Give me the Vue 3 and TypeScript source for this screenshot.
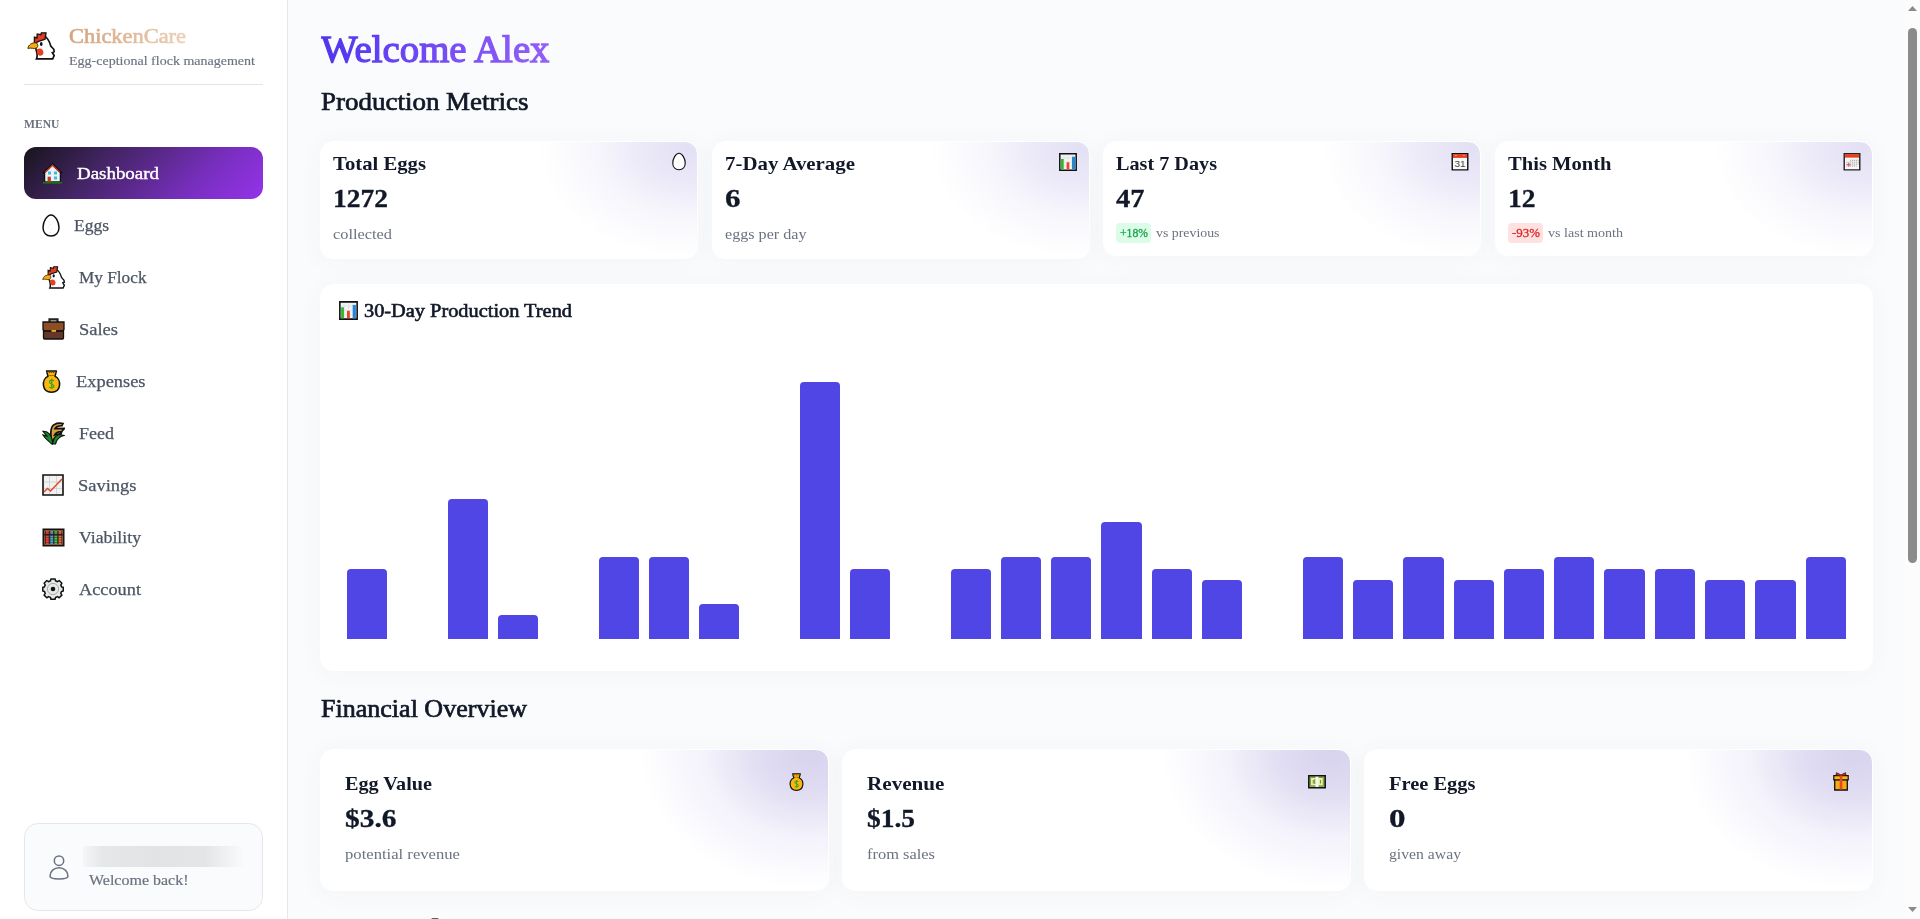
<script setup lang="ts">
import type { Directive } from 'vue'

interface Icon {
  w: number
  h: number
  body: string
}
interface NavItem {
  label: string
  icon: string
  width: number
  slot: number
}
interface Stat {
  title: string
  titleW: number
  value: string
  valueW: number
  note: string
  noteW: number
  icon: string
  badge?: string
  badgeW?: number
  trend?: 'up' | 'down'
}

/* Stretches a line of text horizontally so that it fills the given measure. */
const vFit: Directive<HTMLElement, number> = {
  mounted(el, { value }) {
    const natural = el.getBoundingClientRect().width
    if (!natural) return
    el.style.transform = `scaleX(${value / natural})`
    el.style.marginRight = `${value - natural}px`
  },
}

const bag = `<path d="M4.600 1h9.800L13 6.300c6.800 3 6.500 15.900-3.500 15.900S-.8 9.300 6 6.300Z" fill="#fbb710" stroke="#111" stroke-width="1.500" stroke-linejoin="round"/><path d="M4.500 2.400h10M6 5.500h7" stroke="#7a5200" stroke-width="1.200" stroke-dasharray="1.500 .6"/><path d="M12 10.800C10 9.300 7.300 10.300 7.500 12.200c.2 2 4.300 1.600 4.400 3.800 0 2-3 2.600-4.600 1M9.700 8.800v10" fill="none" stroke="#3fa61c" stroke-width="1.300"/>`
const bars = `<path d="M.8.800h16.400v16.400H.8Z" fill="#f2f3f3" stroke="#111" stroke-width="1.500"/><path d="M5 2v14M9 2v14M13 2v14M2 5h14M2 9h14M2 13h14" stroke="#d9dada" stroke-width=".5"/><path d="M2 6h2.700v10.400H2Z" fill="#32b52f"/><path d="M7.600 9.300h2.700v7.100H7.600Z" fill="#e8472c"/><path d="M13 3.700h3v12.700h-3Z" fill="#2486d8"/>`
const egg = `<path d="M9 .9C13.300.9 17 8.200 17 13.500c0 5.200-3.300 8.600-8 8.600s-8-3.400-8-8.600C1 8.200 4.700.9 9 .9Z" fill="#fff" stroke="#111" stroke-width="1.500"/><path d="M8 10.500h.8M9 15h.8M6 13h.8M8 18.500h.8" stroke="#ddd"/>`
const hen = `<path d="M7 8.500 14 3c4 2.500 4.800 6 5.500 8.500l2.500 2.700.3 2-1.500.7 1.500 2.400-1.200 2.700H7.800C9 19.500 8.300 17 7.300 14Z" fill="#fff" stroke="#111" stroke-width="1.400"/><path d="M6.100 9.500V4.200l2 .7.300-3.300 3 .6.4-1.500h3.800L14.800 6l-5.300 1.700Z" fill="#e33c20" stroke="#111" stroke-width="1.100"/><path d="M.7 13.500c.4-3 3.500-5 6.900-4.600 1.700 1.200 1.700 3 .2 4.400-2.500.7-4.500-.6-7.100.2Z" fill="#f6ad13" stroke="#4a2e00" stroke-width=".8"/><path d="M8 14.300c3-1.900 5.800.1 5.500 3-.3 2.400-3.500 3-4.800 1Z" fill="#e8401f"/><ellipse cx="11.700" cy="9.800" rx="1.100" ry="1.600" fill="#111"/>`

const icons: Record<string, Icon> = {
  hen: { w: 23, h: 23, body: hen },
  house: {
    w: 21,
    h: 21,
    body: `<path d="M2.600 9.500 10.500 2l7.900 7.500V19H2.600Z" fill="#eaf4f7" stroke="#111" stroke-width="1.300"/><path d="m1.200 10.300 9.300-9 9.300 9" fill="none" stroke="#111" stroke-width="2.200"/><path d="m3 9.500 7.500-7.300L18 9.500" fill="none" stroke="#cc3a2a" stroke-width="1.300"/><path d="M6 8.500h3v3H6ZM12 8.500h3v3h-3ZM12 13.500h3v3h-3Z" fill="#40b9de"/><path d="M5.600 13.700h3.300V19H5.600Z" fill="#c83520"/><path d="M1 19.700h19" stroke="#226b18" stroke-width="2"/>`,
  },
  egg: { w: 18, h: 23, body: egg },
  case: {
    w: 23,
    h: 22,
    body: `<path d="M7.500 4V1.300h8V4" fill="none" stroke="#222" stroke-width="2.200"/><rect x="1.500" y="11" width="20" height="10" rx="1" fill="#633629" stroke="#111" stroke-width="1.300"/><path d="M1 4h21v7.500L20.500 13h-18L1 11.500Z" fill="#8d4d25" stroke="#111" stroke-width="1.300"/><path d="M2.500 13h18" stroke="#241007"/><path d="M9.500 12h4.500v1.800H9.500Z" fill="#f0b323"/>`,
  },
  bag: { w: 19, h: 23, body: bag },
  rice: {
    w: 23,
    h: 23,
    body: `<path d="M10.500 21C8 14 8 4.500 12.500 2.500 15 1 18 1 21 1.500l-1 2.200c-4 .3-6 .8-7 3l9.300-.3-2.700 3.300c-4 0-6 1-7 3.300l6.500-1.500-1 2.500c-2.500.3-5 1.500-5.600 3Z" fill="#d8a138" stroke="#111" stroke-width="1.700"/><path d="M10.800 22C11 15 15 11 22 13.500c-5 1-7.300 3.500-8.500 8.500h-3.800C7 19 3.500 17.500 1 13l4 1.200L1 9.300c5-.5 9 3.500 9.800 12.700Z" fill="#178c2a" stroke="#111" stroke-width="1.200"/>`,
  },
  trend: {
    w: 22,
    h: 22,
    body: `<path d="M1 1h20v20H1Z" fill="#f1f2f2" stroke="#111" stroke-width="1.600"/><path d="M7.500 2v18M14.500 2v18M2 8h18M2 14.500h18" stroke="#cfd1d1" stroke-width=".8"/><path d="m2 18 3.500-3.500L8.500 17 20 5" fill="none" stroke="#e2482d" stroke-width="1.500"/>`,
  },
  abacus: {
    w: 23,
    h: 19,
    body: `<path d="M1.200 1.200h20.600v16.600H1.200Z" fill="#3a2721" stroke="#111" stroke-width="1.400"/><path d="M2.500 2.500h18v14h-18Z" fill="none" stroke="#94573a" stroke-width=".9"/><path d="M5.300 3v13.500" stroke="#ec4438" stroke-width="2.800" stroke-dasharray="1.800 .5"/><path d="M9.700 3v13.500" stroke="#43a4e3" stroke-width="2.800" stroke-dasharray="1.800 .5"/><path d="M13.800 3v13.500" stroke="#3fbd48" stroke-width="2.800" stroke-dasharray="1.800 .5"/><path d="M18 3v13.500" stroke="#e5713e" stroke-width="2.800" stroke-dasharray="1.800 .5"/><path d="M2 6.700h19" stroke="#251714" stroke-width="1.200"/>`,
  },
  gear: {
    w: 22,
    h: 22,
    body: `<path d="m8.500 2.800.4-1.900h4.200l.4 1.900 2 .9 1.700-1.200 2.700 2.700-1.100 1.900.8 1.800 1.700.4v3.700l-1.700.4-.8 1.900 1.100 1.800-2.700 2.700-1.700-1.200-2 .9-.4 1.800H8.900l-.4-1.800-2-.9-1.700 1.200-2.700-2.700 1.100-1.800-.8-1.900L.8 13V9.300l1.600-.4.8-1.800-1.100-1.900 2.700-2.700 1.700 1.200Z" fill="#e7e8e8" stroke="#111" stroke-width="1.500" stroke-linejoin="round"/><circle cx="11" cy="11" r="5.600" fill="none" stroke="#999" stroke-width=".8"/><circle cx="11" cy="11" r="2.300" fill="#111"/>`,
  },
  bars: { w: 18, h: 18, body: bars },
  cal31: {
    w: 18,
    h: 19,
    body: `<path d="M.8.800h16.400v17H.8Z" fill="#f8f8f8" stroke="#111" stroke-width="1.500"/><path d="M1.500 1.300h15v3.900h-15Z" fill="#e8401f"/><path d="M4 2.700h1.300M12.500 2.700h1.300" stroke="#ffc7b8"/><text x="9" y="14.700" text-anchor="middle" font-family="Liberation Sans, sans-serif" font-size="10.500" fill="#444">31</text>`,
  },
  cal: {
    w: 18,
    h: 19,
    body: `<path d="M.8.800h16.400v17H.8Z" fill="#f8f8f8" stroke="#222" stroke-width="1.500"/><path d="M1.500 1.300h15v3.600h-15Z" fill="#e8401f"/><path d="M7 7.700h9M3 9.700h13M3 11.700h13M3 13.700h11" stroke="#999" stroke-width="1" stroke-dasharray="1.200 .8"/><path d="M3.500 12.300h4M5.500 10.500v3.700" stroke="#e06070" stroke-width="1.300"/>`,
  },
  note: {
    w: 18,
    h: 14,
    body: `<path d="M.8.800h16.400v12H.8Z" fill="#9eb56e" stroke="#111" stroke-width="1.500"/><path d="M2.500 2.500h12.800v8.300H2.500Z" fill="#e5f59c" stroke="#6d8b3a" stroke-width=".8"/><path d="M7.500 1.700h3V12h-3Z" fill="#f7f7f0"/><path d="M5.300 5v3.500M12.500 5v3.500M6.700 4v5" stroke="#74983a" stroke-width="1.100"/>`,
  },
  gift: {
    w: 16,
    h: 19,
    body: `<path d="M1.700 7.500h12.600V18H1.700Z" fill="#f8a913" stroke="#111" stroke-width="1.300"/><path d="M.8 3.700h14.400v4.200H.8Z" fill="#fbb315" stroke="#111" stroke-width="1.200"/><path d="m8 4-5-1.300.5-2L8 3l4.500-2.300.5 2Z" fill="#e5412b" stroke="#5b140b" stroke-width=".9"/><path d="M8 3.700v13.800" stroke="#df4c22" stroke-width="2.600"/>`,
  },
  user: {
    w: 20,
    h: 25,
    body: `<circle cx="10" cy="5.700" r="4.700" fill="none" stroke="#6b7280" stroke-width="1.500"/><path d="M1 21c0-4.700 4-8.200 9-8.200s9 3.500 9 8.200c0 1.500-2 3-9 3s-9-1.500-9-3Z" fill="none" stroke="#6b7280" stroke-width="1.500"/>`,
  },
}

const nav: NavItem[] = [
  { label: 'Dashboard', icon: 'house', width: 82, slot: 35 },
  { label: 'Eggs', icon: 'egg', width: 35, slot: 32 },
  { label: 'My Flock', icon: 'hen', width: 67.5, slot: 37 },
  { label: 'Sales', icon: 'case', width: 39, slot: 37 },
  { label: 'Expenses', icon: 'bag', width: 69.5, slot: 33.5 },
  { label: 'Feed', icon: 'rice', width: 35, slot: 37 },
  { label: 'Savings', icon: 'trend', width: 58.5, slot: 35.5 },
  { label: 'Viability', icon: 'abacus', width: 62, slot: 37 },
  { label: 'Account', icon: 'gear', width: 62, slot: 37 },
]

const production: Stat[] = [
  { title: 'Total Eggs', titleW: 93, value: '1272', valueW: 55, note: 'collected', noteW: 59, icon: 'egg' },
  { title: '7-Day Average', titleW: 130, value: '6', valueW: 15.5, note: 'eggs per day', noteW: 81.5, icon: 'bars' },
  { title: 'Last 7 Days', titleW: 101, value: '47', valueW: 28.5, note: 'vs previous', noteW: 63.5, icon: 'cal31', badge: '+18%', badgeW: 28, trend: 'up' },
  { title: 'This Month', titleW: 103.5, value: '12', valueW: 27.5, note: 'vs last month', noteW: 75, icon: 'cal', badge: '-93%', badgeW: 28, trend: 'down' },
]

const finance: Stat[] = [
  { title: 'Egg Value', titleW: 87, value: '$3.6', valueW: 51.5, note: 'potential revenue', noteW: 115, icon: 'bag' },
  { title: 'Revenue', titleW: 77.5, value: '$1.5', valueW: 48, note: 'from sales', noteW: 68, icon: 'note' },
  { title: 'Free Eggs', titleW: 86.5, value: '0', valueW: 16.5, note: 'given away', noteW: 72, icon: 'gift' },
]

const eggsPerDay = [6, 0, 12, 2, 0, 7, 7, 3, 0, 22, 6, 0, 6, 7, 7, 10, 6, 5, 0, 7, 5, 7, 5, 6, 7, 6, 6, 5, 5, 7]
const unit = 11.66
</script>

<template>
  <div class="app">
    <aside class="sidebar">
      <header class="brand">
        <svg class="brand-logo" viewBox="0 0 23 23" v-html="icons.hen.body" />
        <div class="brand-copy">
          <div class="brand-name"><span v-fit="117" class="fit">ChickenCare</span></div>
          <div class="brand-tag"><span v-fit="186" class="fit">Egg-ceptional flock management</span></div>
        </div>
      </header>

      <div class="menu-label"><span v-fit="35.5" class="fit">MENU</span></div>
      <nav class="nav">
        <a v-for="(item, i) in nav" :key="item.label" class="nav-item" :class="{ active: i === 0 }">
          <span class="nav-icon" :style="{ width: item.slot + 'px' }">
            <svg
              :width="icons[item.icon].w"
              :height="icons[item.icon].h"
              :viewBox="`0 0 ${icons[item.icon].w} ${icons[item.icon].h}`"
              v-html="icons[item.icon].body"
            />
          </span>
          <span v-fit="item.width" class="fit">{{ item.label }}</span>
        </a>
      </nav>

      <footer class="user">
        <svg width="20" height="25" viewBox="0 0 20 25" v-html="icons.user.body" />
        <div class="user-copy">
          <div class="user-mask"></div>
          <div class="user-hello"><span v-fit="99.5" class="fit">Welcome back!</span></div>
        </div>
      </footer>
    </aside>

    <main class="main">
      <h1><span v-fit="228.5" class="fit hello">Welcome Alex</span></h1>

      <h2><span v-fit="207.5" class="fit">Production Metrics</span></h2>
      <section class="grid four">
        <article v-for="s in production" :key="s.title" class="card small" :class="{ short: s.badge }">
          <div class="card-head">
            <h3><span v-fit="s.titleW" class="fit">{{ s.title }}</span></h3>
            <svg
              class="card-icon"
              :class="s.icon"
              :viewBox="`0 0 ${icons[s.icon].w} ${icons[s.icon].h}`"
              v-html="icons[s.icon].body"
            />
          </div>
          <div class="value"><span v-fit="s.valueW" class="fit">{{ s.value }}</span></div>
          <div v-if="s.badge" class="change">
            <span class="badge" :class="s.trend"><span v-fit="s.badgeW ?? 28" class="fit">{{ s.badge }}</span></span>
            <span v-fit="s.noteW" class="fit">{{ s.note }}</span>
          </div>
          <div v-else class="note"><span v-fit="s.noteW" class="fit">{{ s.note }}</span></div>
        </article>
      </section>

      <section class="chart-card">
        <div class="chart-title">
          <svg width="19" height="19" viewBox="0 0 18 18" v-html="icons.bars.body" />
          <span v-fit="208" class="fit">30-Day Production Trend</span>
        </div>
        <div class="plot">
          <div v-for="(n, i) in eggsPerDay" :key="i" class="slot">
            <div v-if="n" class="bar" :style="{ height: n * unit + 'px' }"></div>
          </div>
        </div>
      </section>

      <h2><span v-fit="206" class="fit">Financial Overview</span></h2>
      <section class="grid three">
        <article v-for="s in finance" :key="s.title" class="card large">
          <div class="card-head">
            <h3><span v-fit="s.titleW" class="fit">{{ s.title }}</span></h3>
            <svg
              class="card-icon"
              :class="s.icon"
              :viewBox="`0 0 ${icons[s.icon].w} ${icons[s.icon].h}`"
              v-html="icons[s.icon].body"
            />
          </div>
          <div class="value"><span v-fit="s.valueW" class="fit">{{ s.value }}</span></div>
          <div class="note"><span v-fit="s.noteW" class="fit">{{ s.note }}</span></div>
        </article>
      </section>
      <div class="next-section"></div>
    </main>

    <div class="scrollbar">
      <svg width="9" height="5" viewBox="0 0 9 5"><path d="M0 5 4.500 0 9 5Z" fill="#8b8b8b" /></svg>
      <div class="thumb"></div>
      <svg class="down" width="9" height="5" viewBox="0 0 9 5"><path d="M0 0h9L4.500 5Z" fill="#8b8b8b" /></svg>
    </div>
  </div>
</template>

<style>
body {
  margin: 0;
  overflow: hidden;
}
</style>

<style scoped>
.app {
  display: flex;
  width: 1920px;
  height: 919px;
  overflow: hidden;
  background: #fafbfd;
  color: #111827;
  font-family: 'Liberation Serif', 'Times New Roman', serif;
}
.app * {
  box-sizing: border-box;
}
svg {
  display: block;
  flex: none;
}
.fit {
  display: inline-block;
  transform-origin: 0 50%;
  white-space: nowrap;
}

/* Sidebar */
.sidebar {
  display: flex;
  flex: none;
  flex-direction: column;
  width: 288px;
  padding: 24px 24px 8px;
  border-right: 1px solid #e5e7eb;
  background: #fff;
}
.brand {
  display: flex;
  height: 61px;
  border-bottom: 1px solid #e2e4e8;
}
.brand-logo {
  width: 28px;
  height: 28px;
  margin: 7.500px 14.5px 0 2.500px;
}
.brand-name {
  height: 26px;
  line-height: 25px;
  font-size: 20.5px;
  -webkit-text-stroke: 0.7px transparent;
}
.brand-name .fit {
  background: linear-gradient(90deg, #d4a27c, #ebd0b7);
  -webkit-background-clip: text;
  background-clip: text;
  color: transparent;
}
.brand-tag {
  line-height: 22px;
  font-size: 12.8px;
  color: #6b7280;
  -webkit-text-stroke: 0.15px;
}
.menu-label {
  margin: 29px 0 13px;
  line-height: 20px;
  font-size: 12.8px;
  font-weight: 700;
  color: #6b7280;
}
.nav-item {
  display: flex;
  align-items: center;
  height: 52px;
  padding: 0 18px;
  border-radius: 12px;
  font-size: 17px;
  line-height: 52px;
  color: #4b5563;
  -webkit-text-stroke: 0.25px;
}
.nav-item .fit {
  padding-top: 1px;
}
.nav-item.active {
  background: linear-gradient(135deg, #17141c 0%, #40245f 30%, #7a2fc2 74%, #9333ea 100%);
  color: #fff;
  -webkit-text-stroke: 0.4px;
}
.user {
  display: flex;
  height: 88px;
  margin-top: auto;
  padding: 22px 16px 0 24px;
  border: 1px solid #e5e7eb;
  border-radius: 14px;
  background: #fafbfc;
}
.user svg {
  margin: 9px 14px 0 0;
}
.user-copy {
  flex: 1;
}
.user-mask {
  width: 162px;
  height: 21px;
  background: linear-gradient(90deg, #f5f6f7, #e6e7e9 12%, #e2e3e5 45%, #e4e5e7 75%, #fafbfc);
}
.user-hello {
  margin: 2px 0 0 6px;
  line-height: 22px;
  font-size: 14.8px;
  color: #6b7280;
  -webkit-text-stroke: 0.2px;
}

/* Content */
.main {
  flex: 1;
  padding: 29px 32px 0;
}
h1,
h2,
h3 {
  margin: 0;
  font-weight: 400;
}
h1 {
  height: 55.5px;
  padding-left: 0.7px;
  line-height: 40px;
  font-size: 38px;
  -webkit-text-stroke: 1.3px transparent;
}
.hello {
  background: linear-gradient(90deg, #4f35ee, #7a4ff3 60%, #935ff7);
  -webkit-background-clip: text;
  background-clip: text;
  color: transparent;
}
h2 {
  height: 32px;
  margin-bottom: 24.5px;
  padding-left: 0.7px;
  line-height: 33px;
  font-size: 25.5px;
  -webkit-text-stroke: 0.7px;
}
.grid {
  display: grid;
  gap: 13.3px;
  align-items: start;
}
.four {
  grid-template-columns: repeat(4, 1fr);
  height: 142.5px;
}
.three {
  grid-template-columns: repeat(3, 1fr);
}
.card,
.chart-card {
  border: 1px solid #fff;
  border-radius: 13px;
  background-color: #fff;
  box-shadow: 0 2px 26px rgba(80, 70, 40, 0.04);
}
.small {
  height: 118px;
  padding: 12px 11.5px 12px 12px;
  background-image: radial-gradient(ellipse 150px 110px at calc(100% - 8px) 6px, #e4e0f4 0%, #ebe8f8 30%, #f7f6fc 62%, #fff 100%);
}
.small.short {
  height: 114.5px;
}
.large {
  height: 142px;
  padding: 24px 23.5px 24px 24px;
  background-image: radial-gradient(ellipse 170px 135px at calc(100% - 18px) 4px, #d8d3ee 0%, #e0dcf2 28%, #f4f2fb 62%, #fff 100%);
}
.card-head {
  display: flex;
  justify-content: space-between;
  height: 20px;
}
h3 {
  line-height: 20px;
  font-size: 19px;
  font-weight: 700;
}
.card-icon {
  width: 18px;
  height: 18px;
}
.card-icon.egg {
  width: 14px;
  height: 19px;
  margin-top: -2px;
}
.card-icon.bars,
.card-icon.cal31,
.card-icon.cal {
  margin-top: -1px;
}
.card-icon.bag {
  width: 15px;
  height: 18px;
  margin-top: -1px;
}
.card-icon.note {
  height: 14px;
  margin-top: 1px;
}
.card-icon.gift {
  width: 16px;
  height: 19px;
  margin-top: -2px;
}
.value {
  margin: 7px 0;
  line-height: 36px;
  font-size: 26px;
  font-weight: 700;
  -webkit-text-stroke: 0.3px;
}
.note {
  line-height: 20px;
  font-size: 14.8px;
  color: #6b7280;
}
.change {
  display: flex;
  gap: 5px;
  margin-top: -1px;
  line-height: 20px;
  font-size: 12.8px;
  color: #6b7280;
}
.badge {
  width: 35px;
  padding-left: 4px;
  border-radius: 4px;
}
.badge.up {
  background: #dcfce7;
  color: #16a34a;
  -webkit-text-stroke: 0.3px;
}
.badge.down {
  background: #fee2e2;
  color: #dc2626;
  -webkit-text-stroke: 0.3px;
}

/* Chart */
.chart-card {
  height: 387px;
  margin-bottom: 21.5px;
  padding: 16px 21px 0 18px;
}
.chart-title {
  display: flex;
  gap: 5.5px;
  height: 20px;
  line-height: 20px;
  font-size: 19px;
  -webkit-text-stroke: 0.6px;
}
.plot {
  display: flex;
  align-items: flex-end;
  height: 318px;
  padding-left: 3px;
}
.slot {
  flex: 1;
}
.bar {
  width: 80%;
  margin: 0 auto;
  border-radius: 4px 4px 0 0;
  background: #4f46e5;
}
.next-section {
  width: 8px;
  height: 2px;
  margin: 27px 0 0 111px;
  border-radius: 4px 4px 0 0;
  background: #555b68;
}

/* Scrollbar */
.scrollbar {
  display: flex;
  flex: none;
  flex-direction: column;
  width: 15px;
  padding: 6px 3px 7px;
  background: #fcfcfc;
}
.thumb {
  width: 9px;
  height: 535px;
  margin-top: 17px;
  border-radius: 5px;
  background: #8b8b8b;
}
.down {
  margin-top: auto;
}
</style>
